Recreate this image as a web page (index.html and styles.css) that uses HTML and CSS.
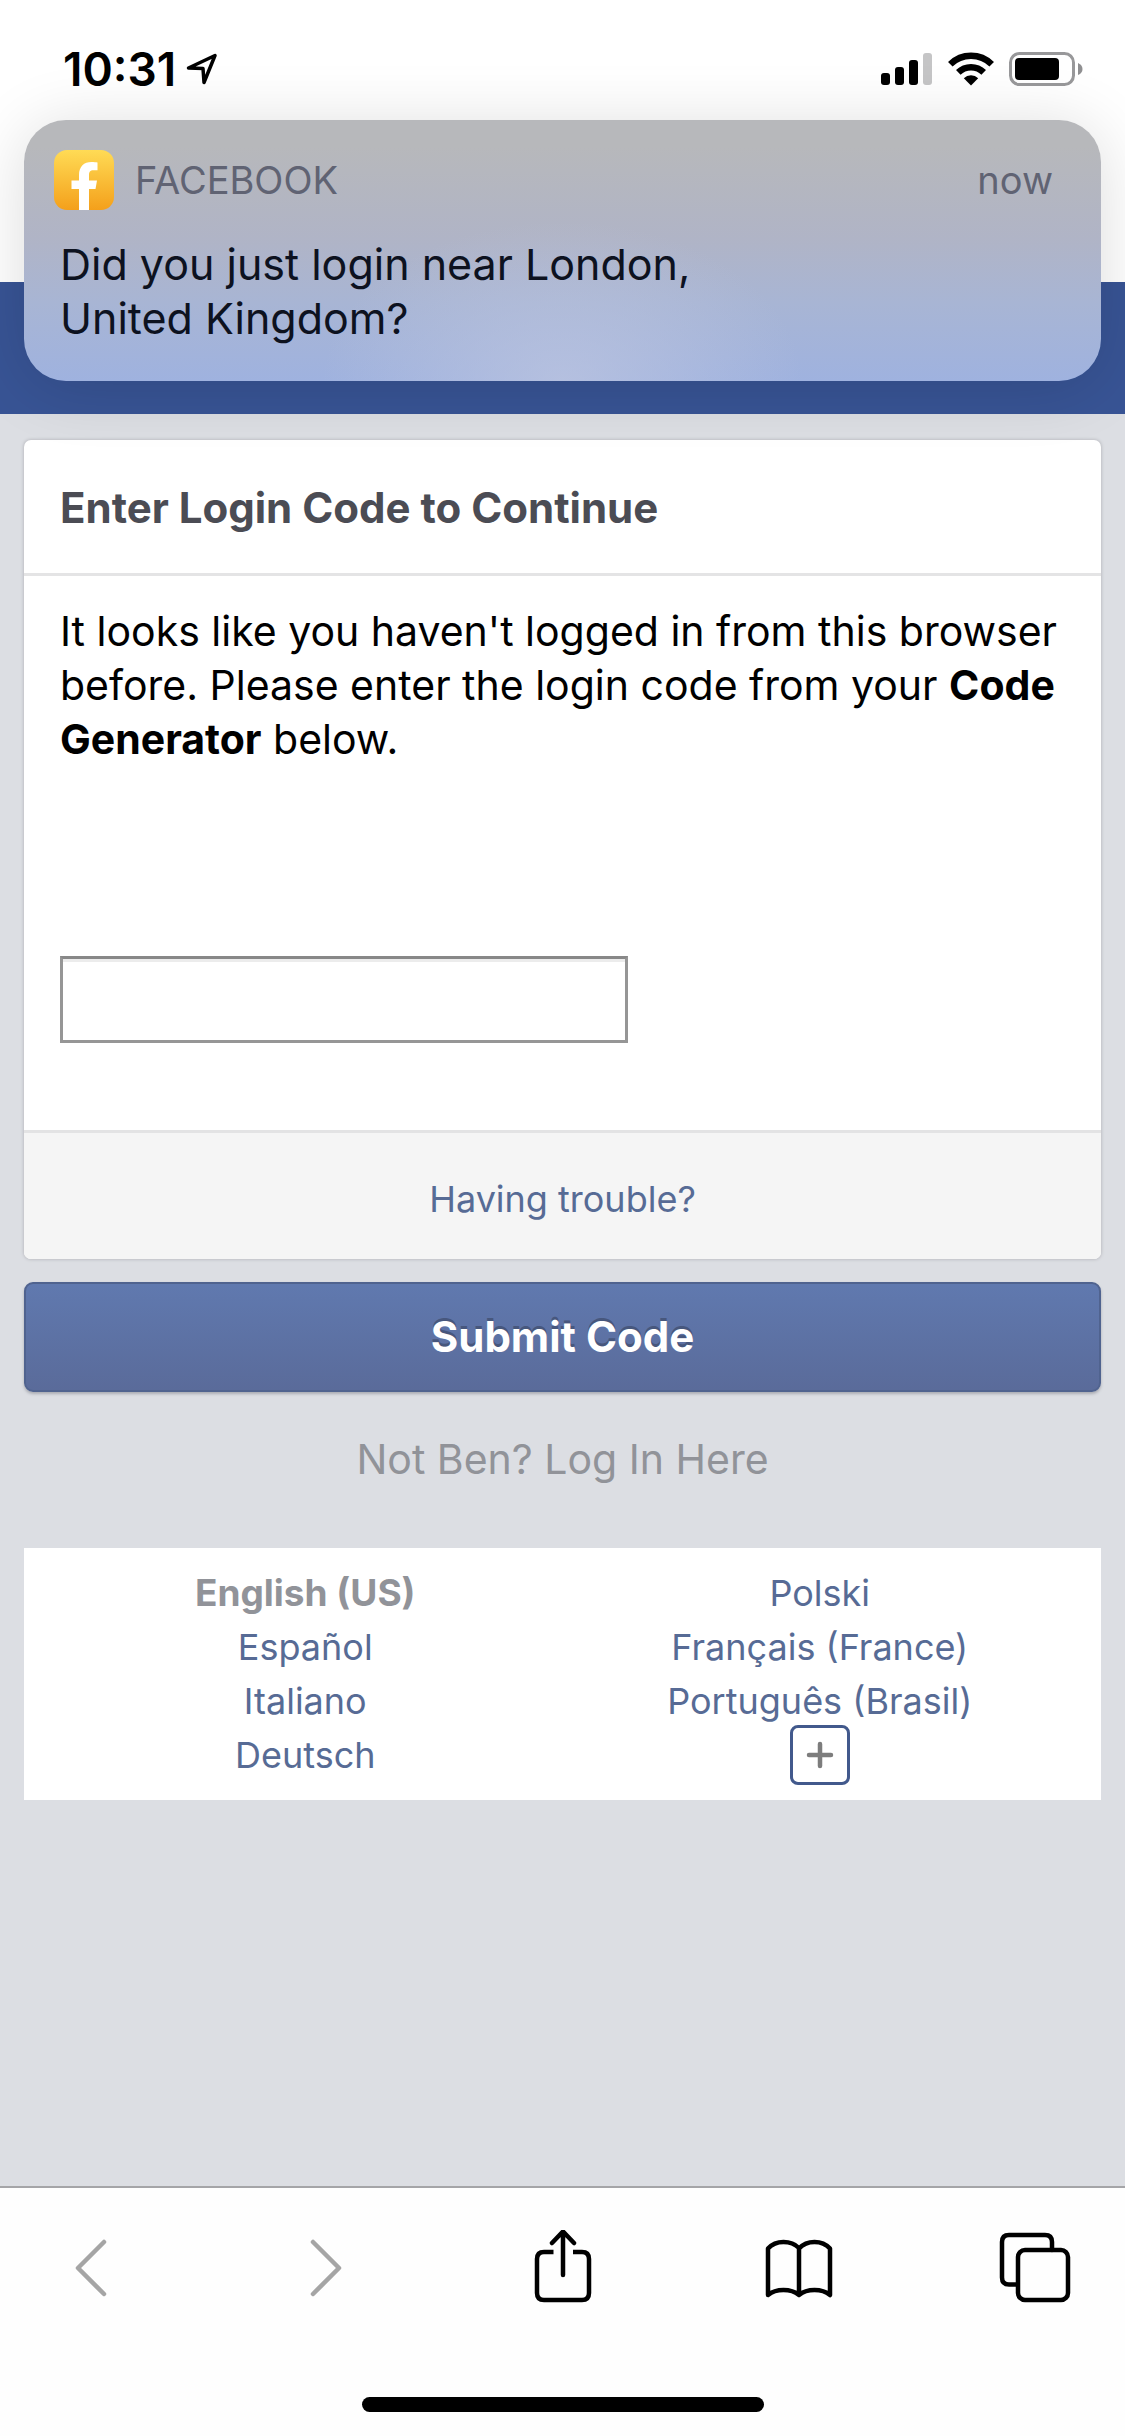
FILE: index.html
```html
<!DOCTYPE html>
<html lang="en">
<head>
<meta charset="utf-8">
<meta name="viewport" content="width=device-width, initial-scale=1">
<title>Enter Login Code to Continue</title>
<link rel="stylesheet" href="styles.css">
</head>
<body>
<div class="screen">
  <div class="status-bar">
    <div class="clock">
      <time>10:31</time>
      <svg width="32" height="32" viewBox="0 0 32 32" fill="none" stroke="#000" stroke-width="3.500" stroke-linejoin="round" aria-hidden="true"><path d="M2.500 15L29 2.500L18 29.500L17 15.500Z"/></svg>
    </div>
    <div class="indicators">
      <svg width="52" height="34" viewBox="0 0 52 34" aria-label="Signal"><rect x="0" y="21" width="9" height="12" rx="3"/><rect x="14" y="15" width="9" height="18" rx="3"/><rect x="28" y="8" width="9" height="25" rx="3"/><rect x="42" y="1" width="9" height="32" rx="3" fill="#c5c5c6"/></svg>
      <svg width="46" height="34" viewBox="0 0 46 34" aria-label="Wi-Fi"><g fill="none" stroke="#000" stroke-width="6.500"><path d="M2.300 12.300A29.500 29.500 0 0 1 43.700 12.300"/><path d="M10.300 20.400A18 18 0 0 1 35.700 20.400"/></g><path d="M15.800 26.200A10.500 10.500 0 0 1 30.200 26.200L23 33.500Z"/></svg>
      <svg width="74" height="34" viewBox="0 0 74 34" aria-label="Battery"><rect x="1.500" y="1.500" width="63" height="31" rx="9" fill="none" stroke="#98989a" stroke-width="3"/><rect x="6" y="6" width="44" height="22" rx="4"/><path d="M69 11Q73.500 13 73.500 17T69 23Z" fill="#8f8f91"/></svg>
    </div>
  </div>

  <section class="notification" aria-label="Notification">
    <div class="notification-top">
      <svg class="app-icon" width="60" height="60" viewBox="0 0 60 60" aria-hidden="true"><defs><linearGradient id="gold" x1="0" y1="0" x2="0" y2="1"><stop offset="0" stop-color="#ffdb55"/><stop offset="1" stop-color="#f4a01b"/></linearGradient></defs><rect width="60" height="60" rx="13" fill="url(#gold)"/><path d="M25 60V39H17.500V30.500H25V25C25 16.500 30 12 37.500 12C40 12 42 12.200 43.500 12.500V20.300H39.500C36 20.300 35 22 35 25V30.500H43L41.500 39H35V60Z" fill="#fff"/></svg>
      <span class="app-name">FACEBOOK</span>
      <span class="when">now</span>
    </div>
    <p class="notification-text">Did you just login near London,<br>United Kingdom?</p>
  </section>

  <header class="site-bar"></header>

  <main class="content">
    <form class="login">
      <div class="card">
        <h1 class="card-title">Enter Login Code to Continue</h1>
        <div class="card-body">
          <p>It looks like you haven't logged in from this browser before. Please enter the login code from your <strong>Code Generator</strong> below.</p>
          <input class="code" type="text" aria-label="Login code">
        </div>
        <div class="card-footer"><a href="#">Having trouble?</a></div>
      </div>
      <button class="submit" type="submit">Submit Code</button>
    </form>
    <a class="switch-user" href="#">Not Ben? Log In Here</a>
    <nav class="languages" aria-label="Languages">
      <div class="language-column">
        <strong>English (US)</strong>
        <a href="#">Español</a>
        <a href="#">Italiano</a>
        <a href="#">Deutsch</a>
      </div>
      <div class="language-column">
        <a href="#">Polski</a>
        <a href="#">Français (France)</a>
        <a href="#">Português (Brasil)</a>
        <button class="more" type="button" aria-label="More languages"><svg width="28" height="28" viewBox="0 0 28 28" stroke="#7d7d7d" stroke-width="4.500" stroke-linecap="round" aria-hidden="true"><path d="M14 3V25M3 14H25"/></svg></button>
      </div>
    </nav>
  </main>

  <footer class="toolbar">
    <div class="tools">
      <button type="button" aria-label="Back" disabled><svg width="72" height="76" viewBox="0 0 72 76" stroke="#a5a5a5"><path d="M50 12L24 38L50 64"/></svg></button>
      <button type="button" aria-label="Forward" disabled><svg width="72" height="76" viewBox="0 0 72 76" stroke="#a5a5a5"><path d="M23 12L49 38L23 64"/></svg></button>
      <button type="button" aria-label="Share"><svg width="72" height="76" viewBox="0 0 72 76" stroke="#000"><path d="M26.500 22H17Q10 22 10 29V63Q10 70 17 70H55Q62 70 62 63V29Q62 22 55 22H46" stroke-linecap="butt"/><path d="M36 45V2M25 13L36 1.500L47 13"/></svg></button>
      <button type="button" aria-label="Bookmarks"><svg width="72" height="76" viewBox="0 0 72 76" stroke="#000"><path d="M36 65V18Q30 12 20.500 12T5 18.500V65Q11 60 20.500 60T36 65Q42 60 51.500 60T67 65V18.500Q61 12 51.500 12T36 18.500"/></svg></button>
      <button type="button" aria-label="Tabs"><svg width="72" height="76" viewBox="0 0 72 76" stroke="#000"><path d="M18 54.500H10Q3 54.500 3 47.500V12Q3 5 10 5H46Q53 5 53 12V20"/><rect x="19" y="20" width="50" height="50" rx="7"/></svg></button>
    </div>
    <div class="home-indicator"></div>
  </footer>
</div>
</body>
</html>
```
FILE: styles.css
```css
* {
  box-sizing: border-box;
}

body {
  margin: 0;
  background: #dcdee3;
  color: #000;
  font-family: Inter, "Liberation Sans", sans-serif;
  font-size: 41px;
  line-height: 54px;
}

a {
  color: #576b95;
  text-decoration: none;
}

button {
  font: inherit;
  padding: 0;
}

svg {
  display: block;
}

p {
  margin: 0;
}

.screen {
  position: relative;
  display: flex;
  flex-direction: column;
  min-height: 100vh;
}

.status-bar {
  display: flex;
  justify-content: space-between;
  align-items: flex-start;
  height: 282px;
  padding: 52px 42px 0 63px;
  background: #fff;
}

.clock {
  display: flex;
  align-items: center;
  gap: 10px;
  font-size: 46px;
  font-weight: 600;
  line-height: 34px;
}

.indicators {
  display: flex;
  gap: 15px;
}

.notification {
  position: absolute;
  top: 120px;
  left: 24px;
  right: 24px;
  padding: 30px 48px 36px 30px;
  border-radius: 42px;
  background:
    radial-gradient(ellipse 240px 160px at 50% 100%, rgba(190, 198, 224, 0.7), rgba(190, 198, 224, 0)),
    linear-gradient(#b7b8bb 10%, #b0b4c6 45%, #a8b5d4 70%, #9fb2df);
  box-shadow: 0 6px 66px rgba(0, 0, 0, 0.14);
}

.notification-top {
  display: flex;
  align-items: center;
  height: 60px;
  color: #606373;
  font-size: 38px;
}

.app-icon {
  margin-right: 21px;
}

.when {
  margin-left: auto;
}

.notification-text {
  margin-top: 27px;
  padding-left: 6px;
  color: #0d121f;
  font-size: 43px;
}

.site-bar {
  height: 132px;
  background: #385495;
}

.content {
  padding: 26px 24px 48px;
}

.card {
  overflow: hidden;
  border-radius: 7px;
  background: #fff;
  box-shadow: 0 0 3px 1px #bfc0c5;
}

.card-title {
  margin: 0;
  padding: 41px 36px 38px;
  border-bottom: 3px solid #e4e4e5;
  color: #4b4c54;
  font-size: 42px;
  font-weight: 700;
}

.card-body {
  padding: 28px 36px 87px;
}

.code {
  display: block;
  width: 568px;
  max-width: 100%;
  height: 87px;
  margin-top: 190px;
  padding: 0 12px;
  border: 3px solid #969696;
  border-top-color: #888;
  border-radius: 0;
  background: #fff;
  box-shadow: inset 0 3px #ececec;
  font: inherit;
}

.card-footer {
  padding: 39px 36px 33px;
  border-top: 3px solid #e3e3e4;
  background: #f5f5f5;
  font-size: 36px;
  text-align: center;
}

.submit {
  display: block;
  width: 100%;
  height: 110px;
  margin-top: 23px;
  border: 2px solid #50638f;
  border-radius: 9px;
  background: linear-gradient(#6079af, #5a6b9a);
  box-shadow: 0 2px 3px #aaacb3;
  color: #fff;
  font-size: 42px;
  font-weight: 700;
  text-shadow: 0 -3px #47577d;
}

.switch-user {
  display: block;
  margin: 40px 0 62px;
  color: #919399;
  text-align: center;
}

.languages {
  display: grid;
  grid-template-columns: 1fr 1fr;
  padding: 18px 24px;
  background: #fff;
  font-size: 36px;
}

.language-column {
  display: flex;
  flex-direction: column;
  align-items: center;
}

.languages strong {
  color: #919399;
  font-size: 37px;
}

.more {
  display: grid;
  place-items: center;
  width: 60px;
  height: 60px;
  margin: -3px 0;
  border: 3px solid #42598c;
  border-radius: 8px;
  background: #fff;
}

.toolbar {
  margin-top: auto;
  padding: 42px 54px 24px;
  border-top: 2px solid #a5a5a8;
  background: #fefefe;
}

.tools {
  display: flex;
  justify-content: space-between;
}

.tools button {
  border: 0;
  background: none;
}

.tools svg {
  fill: none;
  stroke-width: 4.5px;
  stroke-linecap: round;
  stroke-linejoin: round;
}

.home-indicator {
  width: 402px;
  height: 15px;
  margin: 91px auto 0;
  border-radius: 8px;
  background: #000;
}
```
